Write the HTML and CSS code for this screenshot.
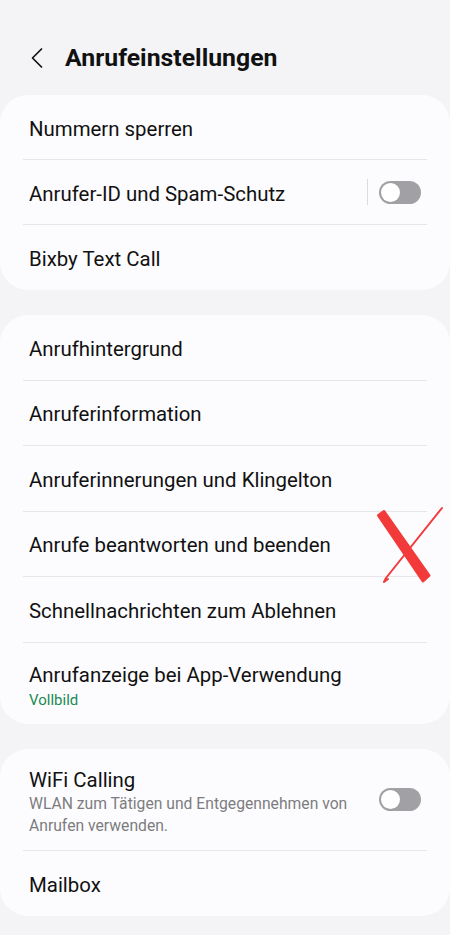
FILE: index.html
```html
<!DOCTYPE html>
<html lang="de">
<head>
<meta charset="utf-8">
<link rel="stylesheet" href="styles.css">
</head>
<body>
<div class="page">
  <header class="header">
    <svg class="back" width="16" height="22" viewBox="0 0 16 22"><path d="M12.5 2 L3.5 11 L12.5 20" fill="none" stroke="#111" stroke-width="1.7" stroke-linecap="round" stroke-linejoin="round"/></svg>
    <h1 class="title">Anrufeinstellungen</h1>
  </header>

  <section class="card card-first">
    <div class="row"><span class="label">Nummern sperren</span></div>
    <div class="row row-split">
      <span class="label">Anrufer-ID und Spam-Schutz</span>
      <span class="control"><span class="vline"></span><span class="toggle"><span class="knob"></span></span></span>
    </div>
    <div class="row last"><span class="label">Bixby Text Call</span></div>
  </section>

  <section class="card">
    <div class="row"><span class="label">Anrufhintergrund</span></div>
    <div class="row"><span class="label">Anruferinformation</span></div>
    <div class="row"><span class="label">Anruferinnerungen und Klingelton</span></div>
    <div class="row"><span class="label">Anrufe beantworten und beenden</span></div>
    <div class="row"><span class="label">Schnellnachrichten zum Ablehnen</span></div>
    <div class="row row-two last">
      <span class="label">Anrufanzeige bei App-Verwendung</span>
      <span class="sub green">Vollbild</span>
    </div>
  </section>

  <section class="card">
    <div class="row row-wifi">
      <div class="text">
        <span class="label">WiFi Calling</span>
        <span class="sub grey">WLAN zum Tätigen und Entgegennehmen von Anrufen verwenden.</span>
      </div>
      <span class="toggle"><span class="knob"></span></span>
    </div>
    <div class="row last"><span class="label">Mailbox</span></div>
  </section>

  <svg class="mark" width="80" height="90" viewBox="0 0 80 90">
    <path d="M6.5 9.5 L12 5.5 L57 69.5 L51 75 Z" fill="#f23a3a" stroke="#f23a3a" stroke-width="3" stroke-linejoin="round"/>
    <path d="M70 2 L14 72 L12 76 L16 73" fill="none" stroke="#f23a3a" stroke-width="2" stroke-linecap="round" stroke-linejoin="round"/>
  </svg>
</div>
</body>
</html>
```

FILE: styles.css
```css
* { box-sizing: border-box; }
html, body { margin: 0; padding: 0; }
body {
  background: #f4f4f6;
  font-family: Roboto, "Noto Sans", sans-serif;
  color: #111;
  width: 450px;
  height: 935px;
  overflow: hidden;
}
.page { position: relative; }
.header {
  height: 95px;
  display: flex;
  align-items: center;
  padding: 20px 0 0 29px;
}
.back { flex: none; }
.title {
  margin: 0 0 0 20px;
  font-size: 24.8px;
  font-weight: 700;
  letter-spacing: 0;
}
.card {
  background: #fcfcfe;
  border-radius: 28px;
  padding: 0 23px;
  margin-bottom: 25px;
}
.row {
  height: 65.5px;
  display: flex;
  align-items: center;
  padding-left: 6px;
  padding-top: 3px;
  border-bottom: 1px solid #e6e6e8;
}
.card-first .row { height: 65px; }
.row.last { border-bottom: none; }
.label { font-size: 20.4px; }
.row-split { justify-content: space-between; padding-right: 6px; padding-top: 0; }
.row-split .label { padding-top: 3px; }
.control { display: flex; align-items: center; }
.vline { width: 1px; height: 26px; background: #dcdcde; margin-right: 11px; }
.toggle {
  width: 42px; height: 23px;
  border-radius: 12px;
  background: #a1a1a5;
  position: relative;
  flex: none;
}
.knob {
  position: absolute; left: 2px; top: 2px;
  width: 19px; height: 19px;
  border-radius: 50%;
  background: #fff;
}
.row-two {
  height: 81px;
  flex-direction: column;
  align-items: flex-start;
  justify-content: center;
  padding-top: 6px;
  padding-bottom: 0;
}
.sub { font-size: 15px; margin-top: 4px; }
.green { color: #1b8a52; }
.grey { color: #7c7c80; font-size: 15.7px; line-height: 22px; }
.row-wifi {
  height: 102px;
  justify-content: space-between;
  padding-right: 6px;
  padding-top: 0;
}
.row-wifi .text { display: flex; flex-direction: column; width: 335px; padding-top: 6px; }
.row-wifi .sub { margin-top: 1px; }
.mark { position: absolute; left: 372px; top: 506px; }
```
